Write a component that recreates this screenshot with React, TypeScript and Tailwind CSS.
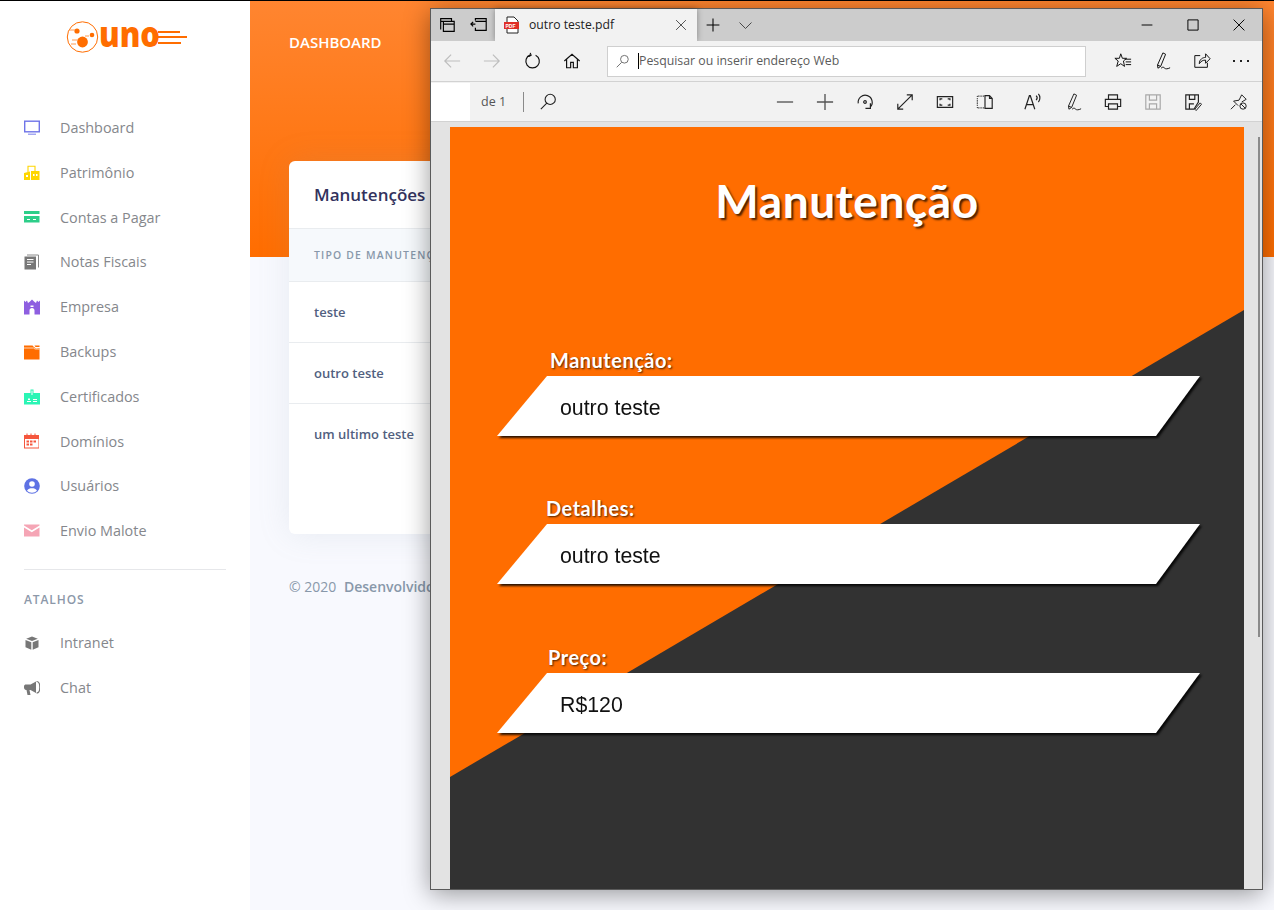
import type { ReactNode } from "react";

type Item = { label: string; icon: ReactNode };

const Ico = ({ children }: { children: ReactNode }) => (
  <svg viewBox="0 0 16 16" className="w-4 h-4 shrink-0">
    {children}
  </svg>
);

const Stroke = ({ children, className = "", size = 20 }: { children: ReactNode; className?: string; size?: number }) => (
  <svg
    viewBox="0 0 20 20"
    width={size}
    height={size}
    fill="none"
    stroke="currentColor"
    strokeWidth="1.3"
    className={`shrink-0 ${className}`}
  >
    {children}
  </svg>
);

const mainItems: Item[] = [
  {
    label: "Dashboard",
    icon: (
      <Ico>
        <rect x="0.7" y="1.2" width="14.6" height="10.6" fill="none" stroke="#6f74e8" strokeWidth="1.4" />
        <rect x="4" y="13.6" width="8" height="1.2" fill="#8f93ee" />
      </Ico>
    ),
  },
  {
    label: "Patrimônio",
    icon: (
      <Ico>
        <path d="M4 7V1.200h7V6" fill="none" stroke="#ffd600" strokeWidth="1.1" />
        <path d="M0 8l6-1.500V15H0zM7 15V6h8.500v9z" fill="#ffd600" />
        <path d="M2 10h2v2H2zM9 9h1.500v2H9zM12 9h1.500v2H12z" fill="#fff" />
      </Ico>
    ),
  },
  {
    label: "Contas a Pagar",
    icon: (
      <Ico>
        <path d="M0 2h15.500v3H0zM0 7h15.500v6.500H0z" fill="#2dce89" />
        <path d="M3 10h3v1H3zM9 10h3v1H9z" fill="#fff" />
      </Ico>
    ),
  },
  {
    label: "Notas Fiscais",
    icon: (
      <Ico>
        <path d="M3 1h11.500v12.500" fill="none" stroke="#8a8a8a" strokeWidth="1" />
        <rect x="0.5" y="2.500" width="11.500" height="13" fill="#777" />
        <path d="M3 5.500h6.500M3 8h6.500M3 10.500h4" stroke="#fff" strokeWidth="1" />
      </Ico>
    ),
  },
  {
    label: "Empresa",
    icon: (
      <Ico>
        <path d="M0 1.500l1.500 1.500L3 1.500 4 4l2-1.500L8 .5l2 2L12 4l1-2.500L14.500 3 16 1.500V15.500H10.500V11.500C10.500 10 9.500 9 8 9S5.500 10 5.500 11.500V15.500H0z" fill="#8e5fe0" />
        <path d="M6.500 6.500h3V8h-3z" fill="#fff" />
      </Ico>
    ),
  },
  {
    label: "Backups",
    icon: (
      <Ico>
        <path d="M0 1.500h8.500L10 3l2 1.500 3.500-.5V15.500H0z" fill="#ff6d00" />
        <path d="M0 4h9.500L11 5h4.500" fill="none" stroke="#fff" strokeWidth="0.7" />
        <path d="M10.500 1.500h5V3h-4z" fill="#ff6d00" />
      </Ico>
    ),
  },
  {
    label: "Certificados",
    icon: (
      <Ico>
        <path d="M0 4h6.500V.5h3V4H16v11.500H0z" fill="#2bf5b5" />
        <path d="M7.500 1.500h1V6h-1zM4 9.500h2V11H4zM3 12h4v1H3zM9 10h4v1H9zM9 12h4v1H9z" fill="#fff" />
      </Ico>
    ),
  },
  {
    label: "Domínios",
    icon: (
      <Ico>
        <path d="M0 2h2.500V.5h1V2h3V.5h1V2h3V.5h1V2h3.500v13.500H0zM1 6v8.500h13.500V6z" fill="#f5563d" />
        <path d="M2.500 7.500H5v2H2.500zM6 7.500h2.500v2H6zM9.500 7.500H12v2H9.500zM2.500 10.500H5v2H2.500zM6 10.500h2.500v2H6z" fill="#f5563d" />
      </Ico>
    ),
  },
  {
    label: "Usuários",
    icon: (
      <Ico>
        <circle cx="8" cy="8" r="7.8" fill="#5e72e4" />
        <circle cx="8" cy="6" r="2.8" fill="#fff" />
        <path d="M3 12.800c1-2 3-2.500 5-2.500s4 .5 5 2.500c-1.300 1.300-3 1.900-5 1.900s-3.700-.6-5-1.900z" fill="#fff" />
      </Ico>
    ),
  },
  {
    label: "Envio Malote",
    icon: (
      <Ico>
        <path d="M0 1.500h15.500v1L7.800 7.200 0 2.500zM0 4.500l7.800 4.700 7.700-4.700v9H0z" fill="#f5a5b5" />
      </Ico>
    ),
  },
];

const shortcutItems: Item[] = [
  {
    label: "Intranet",
    icon: (
      <Ico>
        <path d="M8 1.500l5.800 2.200L8 6 2.200 3.700z" fill="#777" />
        <path d="M1.500 5l5.800 2.300v7.400l-5.800-2.400zM14.500 5L8.700 7.300v7.400l5.800-2.400z" fill="#777" />
      </Ico>
    ),
  },
  {
    label: "Chat",
    icon: (
      <Ico>
        <path d="M0 6.500C0 5 1 4.500 2 4.500h4.500L12 1.500V13L6.500 10h-1l1 5h-3l-1-5H2C1 10 0 9 0 7.500z" fill="#777" />
        <path d="M12.500 1.500c2 0 3.300 2.500 3.300 5.700S14.500 13 12.500 13" fill="none" stroke="#777" strokeWidth="1.2" />
      </Ico>
    ),
  },
];

const NavRow = ({ item }: { item: Item }) => (
  <div className="flex items-center h-[44.8px] pl-6">
    <span className="w-9 flex">{item.icon}</span>
    <span className="text-[14.4px] text-[#85878c]">{item.label}</span>
  </div>
);

const Logo = () => (
  <svg viewBox="0 0 124 60" width="124" height="60" className="block">
    <circle cx="16.500" cy="32" r="15.200" fill="none" stroke="#ff6d00" strokeWidth="1" />
    <circle cx="16.500" cy="37" r="5.400" fill="#ff6d00" />
    <circle cx="11" cy="26" r="2.600" fill="#ff6d00" />
    <circle cx="26" cy="30" r="2.300" fill="#ff6d00" />
    <path d="M3 25h6M6 35h6M5 39h5M19 31h4" stroke="#ff9a50" strokeWidth="1" />
    <text
      x="33"
      y="42"
      textLength="61"
      lengthAdjust="spacingAndGlyphs"
      fontFamily="'Open Sans', sans-serif"
      fontWeight="800"
      fontSize="36"
      fill="#ff6d00"
    >
      uno
    </text>
    <path d="M92 27h22M92 32h29M92 38h23" stroke="#ff6d00" strokeWidth="2" />
  </svg>
);

const Sidebar = () => (
  <aside className="w-[250px] shrink-0 bg-white font-['Open_Sans',sans-serif]">
    <div className="h-[104.5px] pt-[4px] pl-[66px]">
      <Logo />
    </div>
    {mainItems.map((item) => (
      <NavRow key={item.label} item={item} />
    ))}
    <div className="mx-6 mt-[16px] border-t border-[#e6e7ea]" />
    <div className="pl-6 mt-[23px] mb-[13px] h-[14px] text-[12px] leading-[14px] font-semibold tracking-[0.9px] text-[#8c98a9]">
      ATALHOS
    </div>
    {shortcutItems.map((item) => (
      <NavRow key={item.label} item={item} />
    ))}
  </aside>
);

const Card = () => (
  <div className="w-[945px] h-[373px] bg-white rounded-md overflow-hidden shadow-[0_0_32px_rgba(136,152,170,0.15)]">
    <div className="h-[68px] px-[25px] flex items-center border-b border-[#e9ecef]">
      <h3 className="text-[17px] font-semibold text-[#32325d]">Manutenções</h3>
    </div>
    <div className="h-[53px] pt-px px-[25px] flex items-center bg-[#f6f9fc] border-b border-[#e9ecef]">
      <span className="text-[10.4px] font-semibold tracking-[1.2px] text-[#8898aa]">TIPO DE MANUTENÇÃO</span>
    </div>
    {["teste", "outro teste", "um ultimo teste"].map((row, i) => (
      <div key={row} className={`h-[61px] pt-px px-[25px] flex items-center ${i < 2 ? "border-b border-[#e9ecef]" : ""}`}>
        <span className="text-[13px] font-semibold text-[#525f7f]">{row}</span>
      </div>
    ))}
  </div>
);

const PenIcon = () => (
  <Stroke size={18}>
    <path d="M11 1l3 1.500-5.500 13.500-3 2-.5-3.500zM5 14.500L8.500 16" strokeWidth="1.100" />
    <path d="M9 18c2-2 3-1 4 0s3 1 6-.5" strokeWidth="1.100" />
  </Stroke>
);

const TabBar = () => (
  <div className="h-8 bg-[#cccccc] flex items-stretch text-black">
    <div className="w-16 flex items-center">
      <span className="w-8 flex justify-center">
        <Stroke size={18}>
          <path d="M3 15V3h12v3M6 17V6h12v11zM6 9h12M3 6h12" />
        </Stroke>
      </span>
      <span className="w-8 flex justify-center">
        <Stroke size={18}>
          <path d="M6 5V3h12v13H6v-3M6 9H1M3.500 6.500L1 9l2.500 2.500M6 6h12" />
        </Stroke>
      </span>
    </div>
    <div className="w-[202px] bg-[#f2f2f2] flex items-center pl-[9px] shadow-[0_0_6px_rgba(0,0,0,0.35)]">
      <svg viewBox="0 0 16 18" width="16" height="18" className="shrink-0 overflow-visible">
        <path d="M3 1h7l4 4v12H3z" fill="#fff" stroke="#222" strokeWidth="1" />
        <rect x="0" y="6" width="15" height="7" fill="#e02f27" />
        <text x="1.500" y="11.500" fontSize="5" fontWeight="700" fill="#fff" fontFamily="'Liberation Sans', sans-serif">
          PDF
        </text>
      </svg>
      <span className="ml-[9px] text-[12.2px] text-[#222]">outro teste.pdf</span>
      <span className="ml-auto mr-[9px] text-[#444]">
        <Stroke size={14}>
          <path d="M3 3l14 14M17 3L3 17" />
        </Stroke>
      </span>
    </div>
    <span className="w-8 flex items-center justify-center">
      <Stroke size={16}>
        <path d="M10 2v16M2 10h16" />
      </Stroke>
    </span>
    <span className="w-8 flex items-center justify-center text-[#444]">
      <Stroke size={15}>
        <path d="M2 6l8 8 8-8" />
      </Stroke>
    </span>
    <div className="ml-auto flex">
      {["M1 10h18", "M1.500 1.500h17v17h-17z", "M1 1l18 18M19 1L1 19"].map((d) => (
        <span key={d} className="w-[46px] flex items-center justify-center">
          <Stroke size={12}>
            <path d={d} strokeWidth="1.600" />
          </Stroke>
        </span>
      ))}
    </div>
  </div>
);

const NavBar = () => (
  <div className="h-[41px] shrink-0 bg-[#f2f2f2] border-b border-[#d2d2d2] flex items-center text-[#111]">
    <div className="w-[161px] shrink-0 pl-px flex items-center">
      <span className="w-10 flex justify-center text-[#bdbdbd]">
        <Stroke size={18}>
          <path d="M19 10H2M9 3l-7 7 7 7" />
        </Stroke>
      </span>
      <span className="w-10 flex justify-center text-[#bdbdbd]">
        <Stroke size={18}>
          <path d="M1 10h17M11 3l7 7-7 7" />
        </Stroke>
      </span>
      <span className="w-10 flex justify-center">
        <Stroke size={18}>
          <path d="M8 3.200A7.500 7.500 0 1 0 14 3.500M8 1l1 2.500L6.500 5" />
        </Stroke>
      </span>
      <span className="w-10 flex justify-center">
        <Stroke size={18}>
          <path d="M1.500 10L10 2.500 18.500 10M4 8v9.500h4.500v-6h3v6H16V8" />
        </Stroke>
      </span>
    </div>
    <div className="ml-[15px] w-[479px] shrink-0 h-[31px] bg-white border border-[#cfcfcf] flex items-center pl-[8px]">
      <Stroke size={14} className="text-[#666]">
        <path d="M1 19l7-7M17.500 7.500a5.500 5.500 0 1 1-11 0 5.500 5.500 0 0 1 11 0z" />
      </Stroke>
      <span className="ml-[8px] w-px h-[16px] bg-black" />
      <span className="pt-px text-[12.3px] text-[#5b5b5b]">Pesquisar ou inserir endereço Web</span>
    </div>
    <div className="ml-auto mr-[1px] flex">
      <span className="w-[39.5px] flex justify-center">
        <Stroke size={18}>
          <path d="M7.500 2l1.800 5H14l-3.500 3 1.200 6-4.200-3L3 16l1.700-6L1 7h5zM12 8h7M13 11h6M13 14h6" strokeWidth="1.100" />
        </Stroke>
      </span>
      <span className="w-[39.5px] flex justify-center">
        <PenIcon />
      </span>
      <span className="w-[39.5px] flex justify-center">
        <Stroke size={18}>
          <path d="M8 4H2v13h14v-5M7 13c0-5 4-7 7-7V2l5 5.500-5 5V9c-3 0-5 1-7 4z" strokeWidth="1.100" />
        </Stroke>
      </span>
      <span className="w-[39.5px] flex justify-center gap-[5px] items-center">
        <span className="w-[2px] h-[2px] bg-[#222]" />
        <span className="w-[2px] h-[2px] bg-[#222]" />
        <span className="w-[2px] h-[2px] bg-[#222]" />
      </span>
    </div>
  </div>
);

const ToolSep = () => <span className="w-px h-[20px] bg-[#8a8a8a] shrink-0" />;

const Tool = ({ children }: { children: ReactNode }) => <span className="w-10 shrink-0 flex justify-center">{children}</span>;

const PdfToolbar = () => (
  <div className="h-10 shrink-0 bg-[#f2f2f2] border-b border-[#d2d2d2] flex items-center text-[#222]">
    <div className="w-[39px] h-[38px] self-end shrink-0 bg-white" />
    <span className="ml-[11px] pt-[2px] text-[12.5px] text-[#555] w-[42px] shrink-0">de 1</span>
    <ToolSep />
    <span className="ml-[16px]">
      <Stroke size={17}>
        <path d="M1 19l7-7M18 7.500a6 6 0 1 1-12 0 6 6 0 0 1 12 0z" />
      </Stroke>
    </span>
    <div className="ml-[207.5px] flex items-center">
      <Tool>
        <Stroke size={18} className="text-[#555]">
          <path d="M1 10h18" strokeWidth="1.500" />
        </Stroke>
      </Tool>
      <Tool>
        <Stroke size={18} className="text-[#555]">
          <path d="M10 1v18M1 10h18" strokeWidth="1.500" />
        </Stroke>
      </Tool>
      <Tool>
        <Stroke size={18}>
          <path d="M2.500 11.500A7.800 7.800 0 1 1 15.500 16M16 11.500V17h-5.500" />
          <circle cx="10" cy="10" r="1.500" />
        </Stroke>
      </Tool>
      <Tool>
        <Stroke size={18}>
          <path d="M2 18L18 2M12 2h6v6M2 12v6h6" />
        </Stroke>
      </Tool>
      <Tool>
        <Stroke size={18}>
          <path d="M1.500 4h17v12h-17zM4.500 8V6.500H7M15.500 8V6.500H13M4.500 12v1.500H7M15.500 12v1.500H13" />
        </Stroke>
      </Tool>
      <Tool>
        <Stroke size={18}>
          <path d="M2 3.500h7M2 16.500h7M1.500 3.500v13" strokeDasharray="1 1" />
          <path d="M10 3h5l3 3v11h-8zM15 3v3h3" />
        </Stroke>
      </Tool>
      <span className="ml-[4px]">
        <ToolSep />
      </span>
      <span className="w-[44px] pl-[4px] flex justify-center">
        <Stroke size={18}>
          <path d="M1 18L6 3h1l5 15M3 13h7M13.500 3c1.300 1.300 1.300 3.500 0 5M16 1c2.200 2.500 2.200 6.500 0 9" />
        </Stroke>
      </span>
      <Tool>
        <PenIcon />
      </Tool>
      <Tool>
        <Stroke size={18}>
          <path d="M5 7V2h10v5M5 15H1.500V7h17v8H15M5 12h10v6H5z" />
        </Stroke>
      </Tool>
      <Tool>
        <Stroke size={18} className="text-[#a8a8a8]">
          <path d="M2 2h16v16H2zM6 2v6h8V2M6 18v-6h8v6" />
        </Stroke>
      </Tool>
      <Tool>
        <Stroke size={18}>
          <path d="M2 2h14v8l-5 8H2zM6 2v5h6V2M6 18v-6h5" />
          <path d="M12 18l6-7 1.500 1.500-6 7z" strokeWidth="1.100" />
        </Stroke>
      </Tool>
      <span className="ml-[4px]">
        <ToolSep />
      </span>
      <span className="w-[44px] flex justify-center">
        <Stroke size={18}>
          <path d="M1 18l5-5M4 9l6-1 3-6 5 5-5 3M4 9l5 5" strokeWidth="1.100" />
          <circle cx="14.500" cy="14.500" r="3.500" strokeWidth="1.100" />
          <path d="M12 12l5 5" strokeWidth="1.100" />
        </Stroke>
      </span>
    </div>
  </div>
);

const fields = [
  { label: "Manutenção:", value: "outro teste", block: "mt-[117px]", labelPad: "pl-[100px]" },
  { label: "Detalhes:", value: "outro teste", block: "mt-[60px]", labelPad: "pl-[96px]" },
  { label: "Preço:", value: "R$120", block: "mt-[61px]", labelPad: "pl-[98px]" },
];

const PdfPage = () => (
  <div className="relative w-[794px] h-[762px] bg-[#ff6d00] overflow-hidden">
    <svg viewBox="0 0 794 762" className="absolute inset-0 w-full h-full">
      <path d="M794 183V762H0V650z" fill="#323232" />
    </svg>
    <div className="relative flex flex-col">
      <h1 className="mt-[44px] h-[60px] text-center text-[46px] leading-[60px] font-bold tracking-[0.6px] text-white font-['Lato',sans-serif] [text-shadow:2px_2px_2px_rgba(0,0,0,0.7)]">
        Manutenção
      </h1>
      {fields.map((f) => (
        <div key={f.label} className={f.block}>
          <div className={`h-[28px] ${f.labelPad} text-[20px] leading-[24px] font-bold tracking-[0.5px] text-white font-['Lato',sans-serif] [text-shadow:1px_1px_2px_rgba(0,0,0,0.7)]`}>
            {f.label}
          </div>
          <div className="ml-[47px] w-[703px] drop-shadow-[2px_2px_1px_rgba(0,0,0,0.85)]">
            <div className="h-[60px] bg-white pl-[63px] pt-[5px] flex items-center text-[21.3px] text-[#111] font-['Liberation_Sans',sans-serif] [clip-path:polygon(50px_0,100%_0,659px_100%,0_100%)]">
              {f.value}
            </div>
          </div>
        </div>
      ))}
    </div>
  </div>
);

const PdfWindow = () => (
  <div className="absolute left-[430px] top-[7px] w-[833px] h-[882px] flex flex-col border border-[#5a5a5a] bg-[#e3e3e3] font-['Open_Sans',sans-serif] shadow-[0_4px_24px_rgba(0,0,0,0.4)]">
    <TabBar />
    <NavBar />
    <PdfToolbar />
    <div className="flex-1 overflow-hidden pt-[5px] pl-[19px]">
      <PdfPage />
    </div>
    {/* scroll thumb sits over the page area */}
    <div className="absolute left-[827px] top-[128px] w-[2px] h-[500px] bg-[#8a8a8a]" />
  </div>
);

export default function App() {
  return (
    <div className="relative h-[910px] overflow-hidden border-t border-black bg-[#f8f9fe] flex font-['Open_Sans',sans-serif]">
      <Sidebar />
      <main className="flex-1 min-w-0">
        <div className="h-[256px] pt-[32px] pl-[39px] bg-[linear-gradient(180deg,#ff8530,#ff6d00)]">
          <span className="text-[15px] leading-[18px] font-semibold text-white block">DASHBOARD</span>
        </div>
        <div className="-mt-[96px] pl-[39px]">
          <Card />
          <p className="mt-[42px] pb-4 text-[14px] text-[#8898aa]">
            © 2020 <span className="ml-1 font-semibold">Desenvolvido</span>
          </p>
        </div>
      </main>
      <PdfWindow />
    </div>
  );
}
